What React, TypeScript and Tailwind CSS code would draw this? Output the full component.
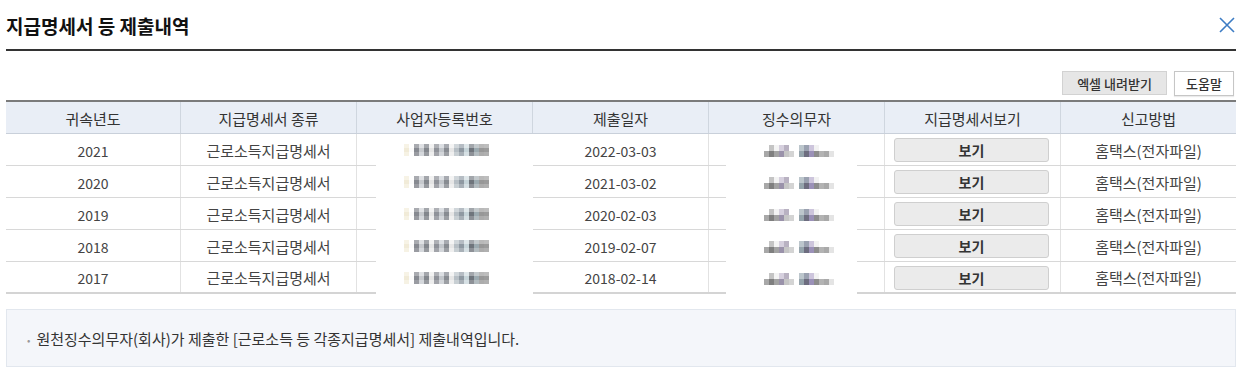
import React from "react";

const rows = [
  { year: "2021", date: "2022-03-03" },
  { year: "2020", date: "2021-03-02" },
  { year: "2019", date: "2020-02-03" },
  { year: "2018", date: "2019-02-07" },
  { year: "2017", date: "2018-02-14" },
];

const bizTop = ["#f7f3e6", "#ffffff", "#a9abb0", "#dfe1e4", "#a3a6ab", "#f2f2f2", "#aeb0b5", "#dcdfe3", "#a7aab0", "#f4f4f4", "#d0d6da", "#b5bcc3", "#dfe7ea", "#a2a6ab", "#c3c9cc", "#b9b9b9", "#bdbdbd"];
const bizMid = ["#f1ebd8", "#fbfbfb", "#878a91", "#c6c9cd", "#83878d", "#e4e4e4", "#8f9299", "#c2c6cb", "#888c92", "#e6e6e6", "#b7bfc5", "#8f99a2", "#c6d4d9", "#6f757c", "#9caab0", "#979797", "#9b9b9b"];
const bizBot = ["#f6f2e4", "#ffffff", "#9a9ca2", "#d5d8dc", "#979a9f", "#eeeeee", "#a2a4aa", "#d3d6da", "#9c9fa4", "#efefef", "#c8cfd3", "#a8b0b7", "#d6e0e4", "#8d9197", "#b3bcc0", "#acacac", "#b0b0b0"];

const nameTop = ["#ffffff", "#c4c4c4", "#f4f4f4", "#d6d0de", "#b9b2c2", "#ffffff", "#ffffff", "#bcc6cc", "#9aa1b0", "#cdc5dc", "#f2f2f2", "#ffffff", "#ffffff", "#ffffff"];
const nameBot = ["#a8a8a8", "#7f7f7f", "#a3a3a3", "#9a92aa", "#c6c6c6", "#d4d4d4", "#ffffff", "#95a4ac", "#6d6d7f", "#9b91b8", "#8d8d8d", "#b3b3b3", "#a9a9a9", "#e4e4e4"];

function Pix({ rowsData, cell, h }: { rowsData: string[][]; cell: number; h: number }) {
  return (
    <div className="flex flex-col">
      {rowsData.map((r, i) => (
        <div key={i} className="flex">
          {r.map((c, j) => (
            <div key={j} style={{ width: cell, height: h, backgroundColor: c }} />
          ))}
        </div>
      ))}
    </div>
  );
}

export default function App() {
  const font = { fontFamily: '"Noto Sans CJK KR", "Noto Sans", sans-serif' };
  return (
    <div className="w-[1256px] h-[389px] bg-white overflow-hidden" style={font}>
      <div className="w-[1230px] ml-[6px]">
        {/* Title */}
        <div className="flex items-center justify-between h-[51px] pt-[3px] border-b-2 border-[#333333]">
          <h3 className="text-[19px] font-bold text-[#111111] leading-[24px]">지급명세서 등 제출내역</h3>
          <svg width="18" height="18" viewBox="0 0 18 18" className="mb-[2px]">
            <path d="M2 2 L16 16 M16 2 L2 16" stroke="#3d7cc4" strokeWidth="1.6" fill="none" />
          </svg>
        </div>

        {/* Buttons */}
        <div className="flex justify-end gap-[7px] mt-[20px] mr-[2px]">
          <button className="h-[24px] w-[105px] bg-[#e6e6e6] border border-[#d2d2d2] text-[13px] font-medium text-[#333] leading-none">
            엑셀 내려받기
          </button>
          <button className="h-[25px] w-[60px] bg-white border border-[#c6c6c6] shadow-[0_1px_1px_rgba(0,0,0,0.08)] text-[13px] font-medium text-[#333] leading-none">
            도움말
          </button>
        </div>

        {/* Table */}
        <div className="mt-[4px] border-t-2 border-[#7b7b7b] text-[15px]">
          <div className="grid grid-cols-[174px_repeat(6,176px)] h-[32px] bg-[#e9eef6] border-b border-[#c9d0da] text-[#333]">
            {["귀속년도", "지급명세서 종류", "사업자등록번호", "제출일자", "징수의무자", "지급명세서보기", "신고방법"].map((t, i) => (
              <div key={t} className={`flex items-center justify-center pt-[3px] ${i > 0 ? "border-l border-[#cfd6df]" : ""}`}>
                {t}
              </div>
            ))}
          </div>
          {rows.map((r, idx) => (
            <div
              key={r.year}
              className={`grid grid-cols-[174px_repeat(6,176px)] h-[32px] text-[#444] ${idx === rows.length - 1 ? "border-b-2 border-[#d4d4d4]" : "border-b border-[#d8d8d8]"}`}
            >
              <div className="flex items-center justify-center pt-[3px] text-[14px]">{r.year}</div>
              <div className="flex items-center justify-center pt-[3px] border-l border-[#e2e2e2]">근로소득지급명세서</div>
              <div className="relative border-l border-[#e2e2e2]">
                <div className="absolute left-[19px] right-[-1px] top-0 bottom-[-2px] bg-white flex items-center pl-[28px] pb-[1px]">
                  <Pix rowsData={[bizTop, bizMid, bizBot]} cell={5} h={4} />
                </div>
              </div>
              <div className="flex items-center justify-center pt-[3px] text-[14px] border-l border-[#e2e2e2]">{r.date}</div>
              <div className="relative border-l border-[#e2e2e2]">
                <div className="absolute left-[17px] right-[27px] top-0 bottom-[-2px] bg-white flex items-center pl-[38px] pt-[1px]">
                  <Pix rowsData={[nameTop, nameBot]} cell={5} h={6} />
                </div>
              </div>
              <div className="flex items-center border-l border-[#e2e2e2] pl-[9px] pr-[11px] pt-[1px]">
                <button className="w-full h-[24px] bg-[#ebebeb] border border-[#cfcfcf] rounded-[3px] text-[14px] font-bold text-[#333] leading-none">
                  보기
                </button>
              </div>
              <div className="flex items-center justify-center pt-[3px] border-l border-[#e2e2e2]">홈택스(전자파일)</div>
            </div>
          ))}
        </div>

        {/* Note */}
        <div className="mt-[15px] h-[58px] bg-[#f4f6fa] border border-[#e2e7ee] flex items-center pl-[20px] pt-[2px] text-[15px] text-[#333]">
          <span className="text-[#999] mr-[6px] text-[10px]">•</span>
          원천징수의무자(회사)가 제출한 [근로소득 등 각종지급명세서] 제출내역입니다.
        </div>
      </div>
    </div>
  );
}
